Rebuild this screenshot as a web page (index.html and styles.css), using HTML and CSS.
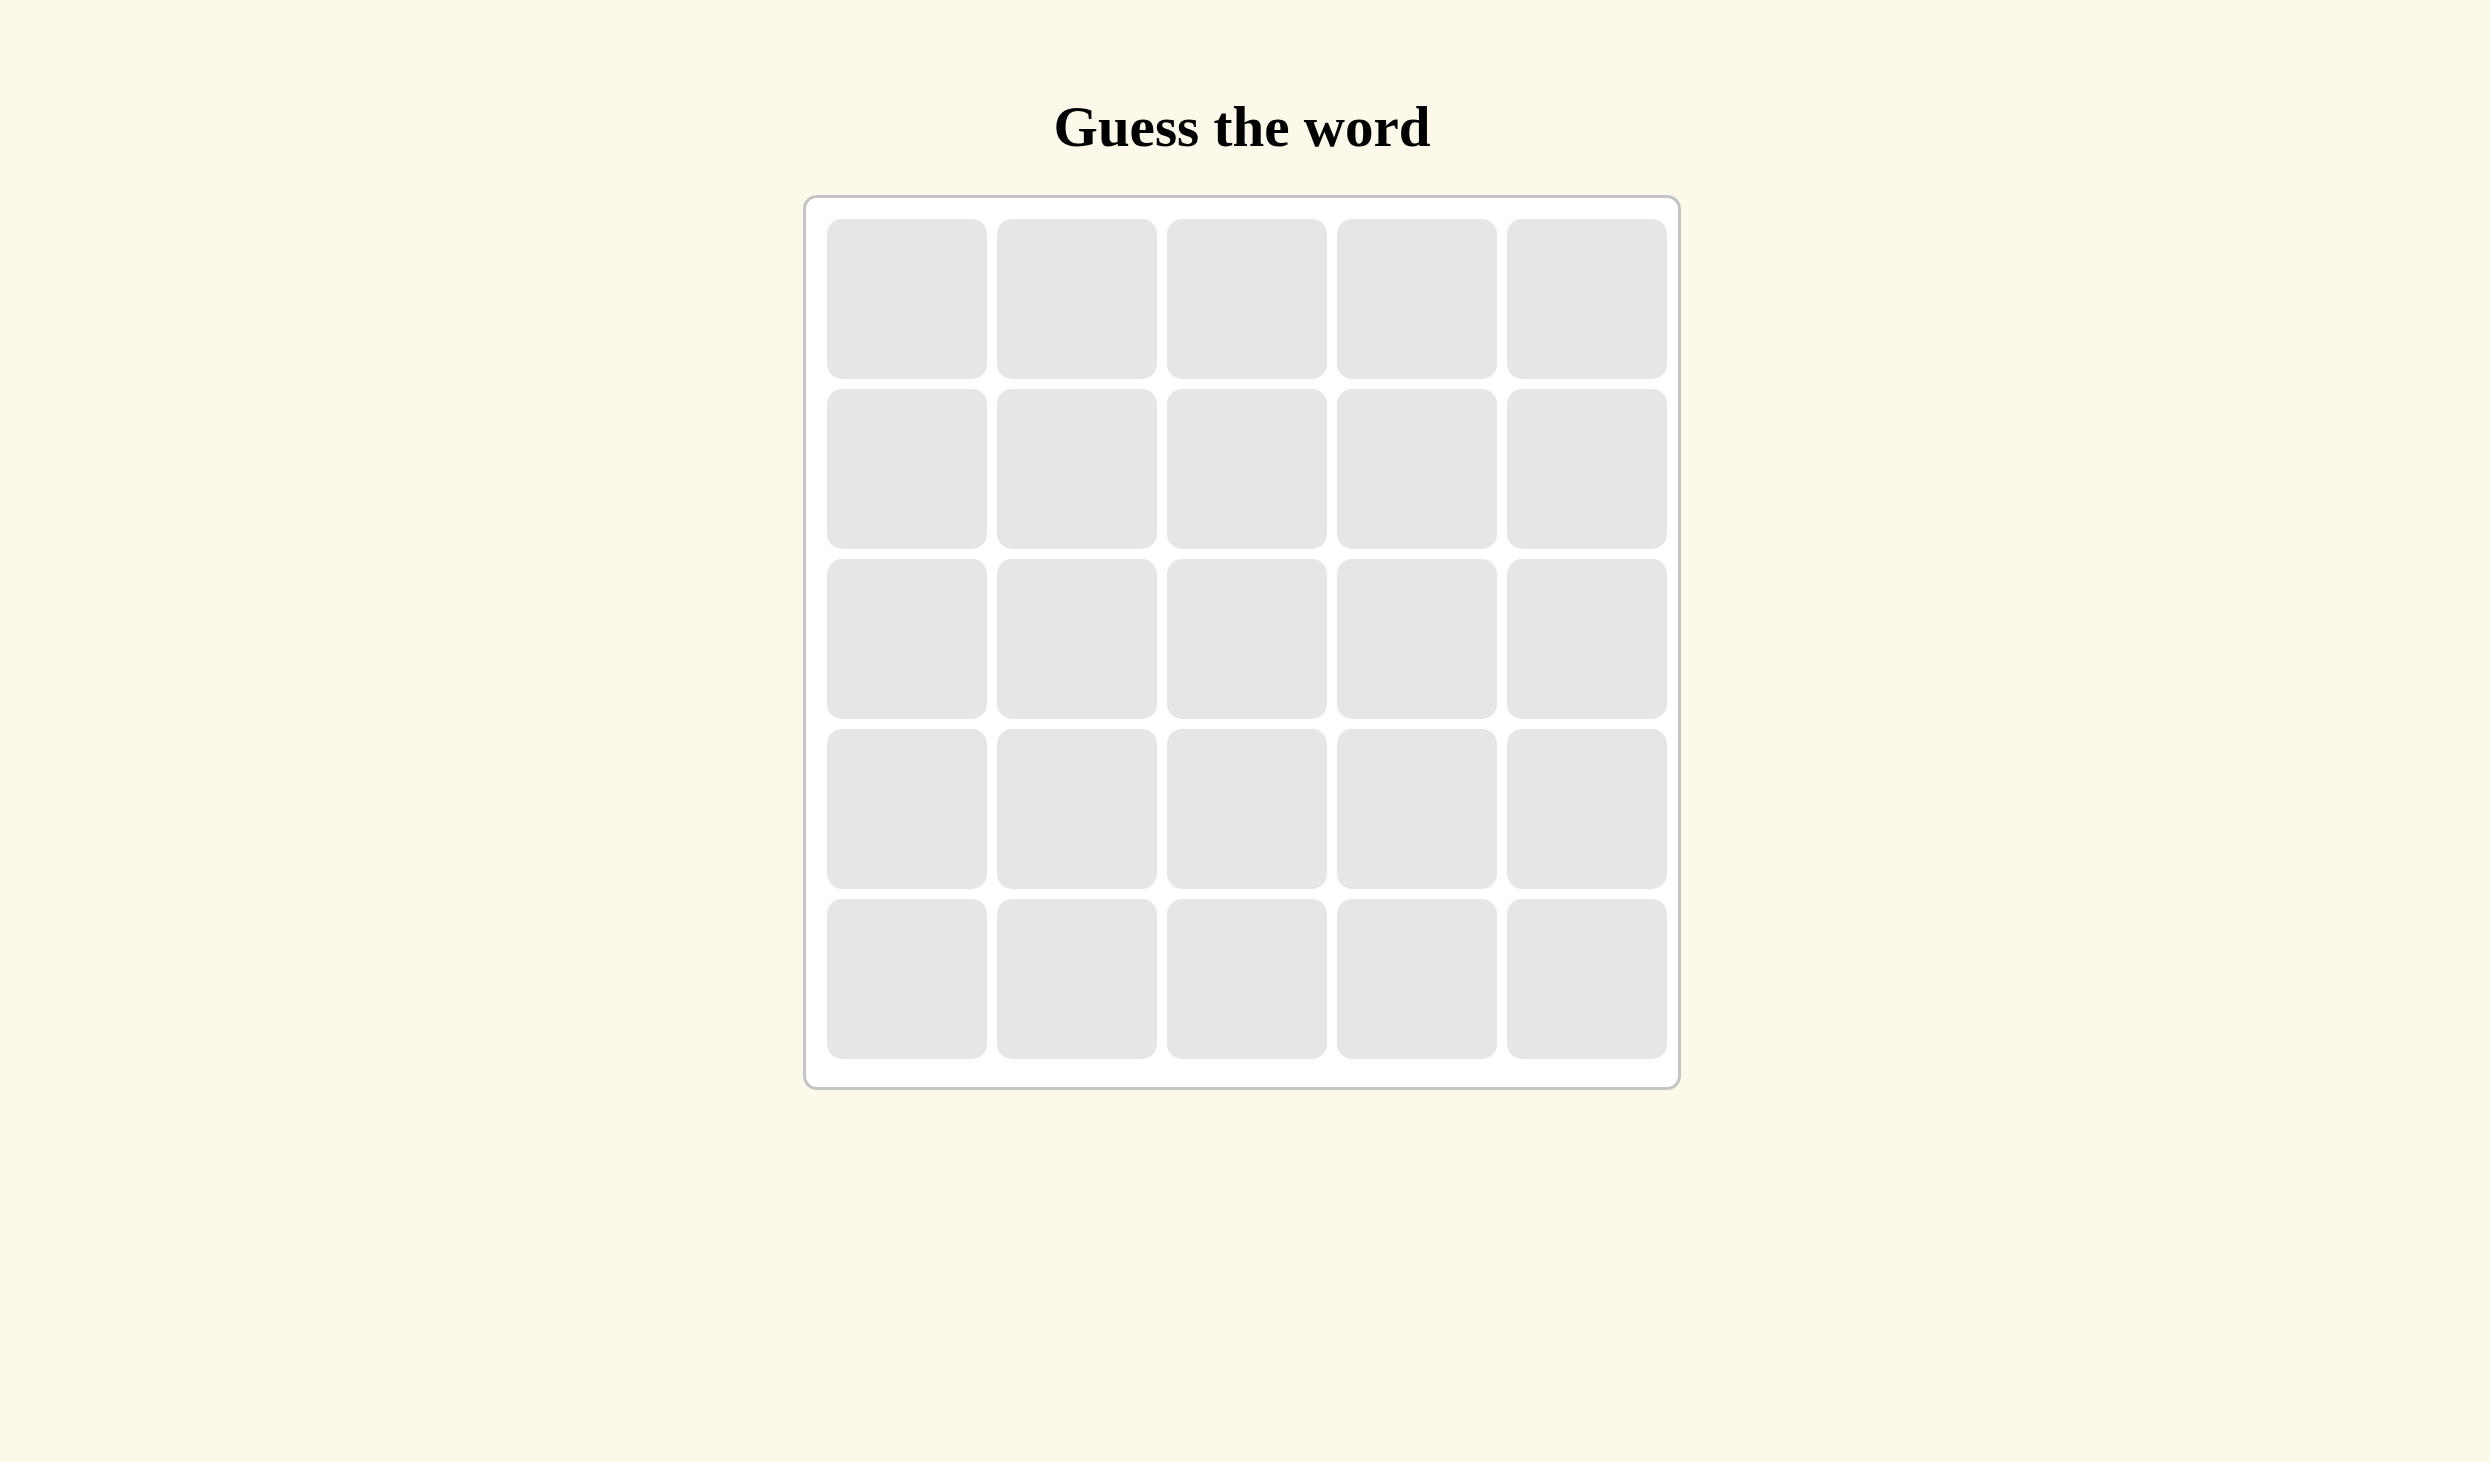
FILE: index.html
```html
<!DOCTYPE html>
<html lang="en">
<head>
<meta charset="utf-8">
<title>Guess the word</title>
<link rel="stylesheet" href="styles.css">
</head>
<body>
<main class="page">
  <h1 class="title">Guess the word</h1>
  <div class="board">
    <div class="grid">
      <div class="tile"></div><div class="tile"></div><div class="tile"></div><div class="tile"></div><div class="tile"></div>
      <div class="tile"></div><div class="tile"></div><div class="tile"></div><div class="tile"></div><div class="tile"></div>
      <div class="tile"></div><div class="tile"></div><div class="tile"></div><div class="tile"></div><div class="tile"></div>
      <div class="tile"></div><div class="tile"></div><div class="tile"></div><div class="tile"></div><div class="tile"></div>
      <div class="tile"></div><div class="tile"></div><div class="tile"></div><div class="tile"></div><div class="tile"></div>
    </div>
  </div>
</main>
</body>
</html>
```

FILE: styles.css
```css
html, body {
  margin: 0;
  padding: 0;
  background: #fdf9ea;
}

.page {
  display: flex;
  flex-direction: column;
  align-items: center;
  padding-top: 99px;
  padding-right: 6px;
  min-height: 100vh;
  box-sizing: border-box;
}

.title {
  margin: 0 0 40px 0;
  font-family: "Liberation Serif", "Times New Roman", serif;
  font-weight: 700;
  font-size: 57px;
  line-height: 56px;
  color: #000;
}

.board {
  background: #fff;
  border: 3px solid #c4c4c4;
  border-radius: 14px;
  padding: 21px 11px 28px 21px;
}

.grid {
  display: grid;
  grid-template-columns: repeat(5, 160px);
  grid-auto-rows: 160px;
  gap: 10px;
}

.tile {
  background: #e6e6e6;
  border-radius: 15px;
}
```
